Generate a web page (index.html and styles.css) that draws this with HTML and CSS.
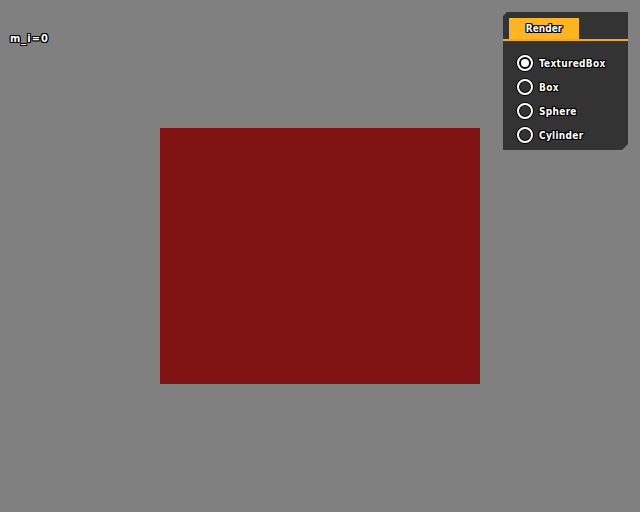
FILE: index.html
```html
<!DOCTYPE html>
<html>
<head>
<meta charset="utf-8">
<link rel="stylesheet" href="styles.css">
</head>
<body>
<div class="stage">
  <div class="box"></div>
  <div class="label">m_i=0</div>
  <div class="panel">
    <div class="tabs"><div class="tab">Render</div></div>
    <div class="options">
      <div class="opt"><span class="radio on"></span><span class="txt">TexturedBox</span></div>
      <div class="opt"><span class="radio"></span><span class="txt">Box</span></div>
      <div class="opt"><span class="radio"></span><span class="txt">Sphere</span></div>
      <div class="opt"><span class="radio"></span><span class="txt">Cylinder</span></div>
    </div>
  </div>
</div>
</body>
</html>
```
FILE: styles.css
```css
html, body { margin: 0; padding: 0; }
body { background: #808080; font-family: "DejaVu Sans Condensed", "DejaVu Sans", sans-serif; }
.stage {
  position: relative;
  width: 640px; height: 512px;
  display: flex; align-items: center; justify-content: center;
}
.box { width: 320px; height: 256px; background: #801414; }
.label, .txt, .tab {
  color: #fff;
  font-weight: bold;
  font-size: 10px;
  text-shadow: 1px 0 0 #000, -1px 0 0 #000, 0 1px 0 #000, 0 -1px 0 #000, 1px 1px 0 #000, -1px -1px 0 #000, 1px -1px 0 #000, -1px 1px 0 #000;
}
.label { position: absolute; left: 10px; top: 32px; font-size: 11px; letter-spacing: 1px; }
.panel {
  position: absolute; left: 503px; top: 12px;
  width: 125px; height: 138px;
  background: #333333;
  clip-path: polygon(4px 0, 100% 0, 100% calc(100% - 6px), calc(100% - 6px) 100%, 0 100%, 0 4px);
  box-sizing: border-box;
}
.tabs {
  margin-top: 6px;
  padding-left: 6px;
  border-bottom: 2px solid #f0a828;
  height: 21px;
  display: flex;
}
.tab {
  width: 70px; height: 21px;
  background: #ffb424;
  display: flex; align-items: center; justify-content: center;
  line-height: 1;
}
.options { display: flex; flex-direction: column; gap: 8px; padding: 14px 0 0 14px; }
.opt { display: flex; align-items: center; gap: 6px; height: 16px; }
.radio {
  width: 12px; height: 12px; border-radius: 50%;
  border: 2px solid #fff;
  box-shadow: 0 0 0 1px #000, inset 0 0 0 1px #000;
  position: relative;
}
.radio.on::after {
  content: ""; position: absolute; left: 2px; top: 2px; width: 8px; height: 8px;
  border-radius: 50%; background: #fff; box-shadow: 0 0 0 1px #000;
}
.txt { letter-spacing: 0.3px; }
```
